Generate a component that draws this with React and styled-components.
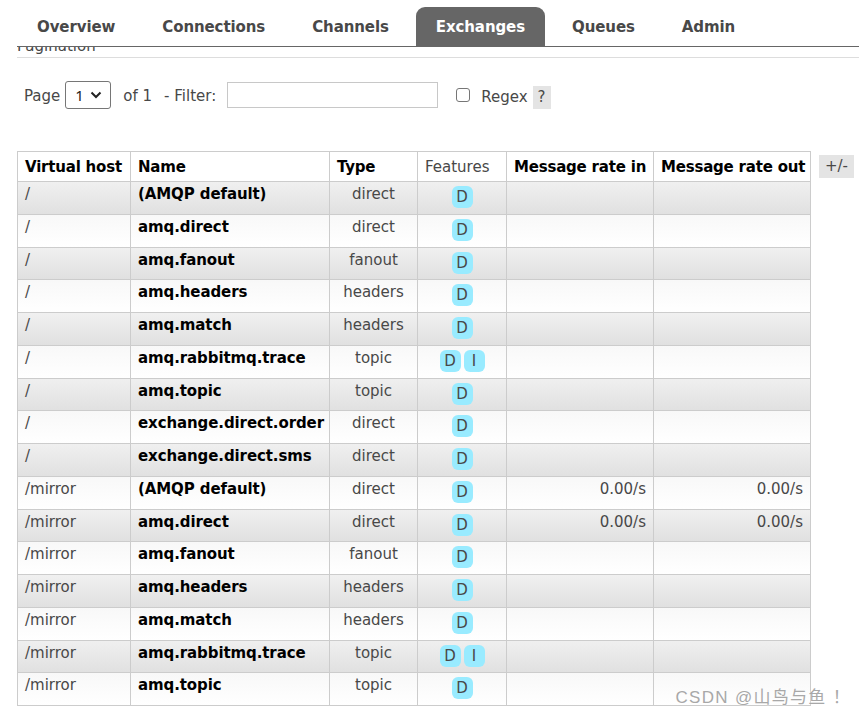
import React from 'react';
import styled, { createGlobalStyle } from 'styled-components';

const GlobalStyle = createGlobalStyle`
  html, body {
    margin: 0;
    padding: 0;
    background: #fff;
    font-family: 'DejaVu Sans', Verdana, sans-serif;
    color: #484848;
  }
`;

const tabs = ['Overview', 'Connections', 'Channels', 'Exchanges', 'Queues', 'Admin'];

const rows = [
  { vhost: '/', name: '(AMQP default)', type: 'direct', features: ['D'] },
  { vhost: '/', name: 'amq.direct', type: 'direct', features: ['D'] },
  { vhost: '/', name: 'amq.fanout', type: 'fanout', features: ['D'] },
  { vhost: '/', name: 'amq.headers', type: 'headers', features: ['D'] },
  { vhost: '/', name: 'amq.match', type: 'headers', features: ['D'] },
  { vhost: '/', name: 'amq.rabbitmq.trace', type: 'topic', features: ['D', 'I'] },
  { vhost: '/', name: 'amq.topic', type: 'topic', features: ['D'] },
  { vhost: '/', name: 'exchange.direct.order', type: 'direct', features: ['D'] },
  { vhost: '/', name: 'exchange.direct.sms', type: 'direct', features: ['D'] },
  { vhost: '/mirror', name: '(AMQP default)', type: 'direct', features: ['D'], rateIn: '0.00/s', rateOut: '0.00/s' },
  { vhost: '/mirror', name: 'amq.direct', type: 'direct', features: ['D'], rateIn: '0.00/s', rateOut: '0.00/s' },
  { vhost: '/mirror', name: 'amq.fanout', type: 'fanout', features: ['D'] },
  { vhost: '/mirror', name: 'amq.headers', type: 'headers', features: ['D'] },
  { vhost: '/mirror', name: 'amq.match', type: 'headers', features: ['D'] },
  { vhost: '/mirror', name: 'amq.rabbitmq.trace', type: 'topic', features: ['D', 'I'] },
  { vhost: '/mirror', name: 'amq.topic', type: 'topic', features: ['D'] },
];

const App = () => {
  return (
    <Page>
      <GlobalStyle />
      <Nav>
        {tabs.map((t) => (
          <Tab key={t} active={t === 'Exchanges'}>{t}</Tab>
        ))}
      </Nav>
      <Section>
        <SectionHead>
          <HeadText>Pagination</HeadText>
        </SectionHead>
        <Filters>
          <Label>Page</Label>
          <Select>
            <span>1</span>
            <svg width="12" height="8" viewBox="0 0 12 8">
              <path d="M1.5 1.5 L6 6 L10.5 1.5" fill="none" stroke="#222" strokeWidth="2" />
            </svg>
          </Select>
          <Label gap={12}>of 1</Label>
          <Label gap={12}>- Filter:</Label>
          <FilterInput />
          <Checkbox />
          <Label gap={11} down>Regex</Label>
          <Help>?</Help>
        </Filters>
        <TableRow>
          <List>
            <colgroup>
              <col style={{ width: 113 }} />
              <col style={{ width: 199 }} />
              <col style={{ width: 88 }} />
              <col style={{ width: 89 }} />
              <col style={{ width: 147 }} />
              <col style={{ width: 157 }} />
            </colgroup>
            <thead>
              <tr>
                <Th>Virtual host</Th>
                <Th>Name</Th>
                <Th>Type</Th>
                <Th plain>Features</Th>
                <Th>Message rate in</Th>
                <Th>Message rate out</Th>
              </tr>
            </thead>
            <tbody>
              {rows.map((r, i) => (
                <Tr key={i} alt={i % 2 === 0}>
                  <Td>{r.vhost}</Td>
                  <Td bold>{r.name}</Td>
                  <Td center>{r.type}</Td>
                  <Td center>
                    <Badges>
                      {r.features.map((f) => (
                        <Badge key={f}>{f}</Badge>
                      ))}
                    </Badges>
                  </Td>
                  <Td right>{r.rateIn}</Td>
                  <Td right>{r.rateOut}</Td>
                </Tr>
              ))}
            </tbody>
          </List>
          <Toggle>+/-</Toggle>
        </TableRow>
      </Section>
      <Watermark>CSDN @山鸟与鱼 ！</Watermark>
    </Page>
  );
};

export default App;

const Page = styled.div`
  position: relative;
  width: 859px;
  height: 715px;
  overflow: hidden;
`;

const Nav = styled.ul`
  list-style: none;
  display: flex;
  gap: 7px;
  margin: 0 0 0 17px;
  padding: 7px 0 0 0;
  border-bottom: 1px solid #666;
`;

const Tab = styled.li`
  height: 38px;
  line-height: 38px;
  padding: 1px 20px 0 20px;
  font-size: 15px;
  font-weight: bold;
  letter-spacing: -0.1px;
  color: ${(p) => (p.active ? '#fff' : '#484848')};
  background: ${(p) => (p.active ? '#666' : 'transparent')};
  border-radius: 9px 9px 0 0;
`;

const Section = styled.div`
  margin: 0 0 0 17px;
`;

const SectionHead = styled.div`
  height: 10px;
  overflow: hidden;
  display: flex;
  align-items: flex-end;
  border-bottom: 1px solid #ddd;
`;

const HeadText = styled.h2`
  margin: 0 0 2px 0;
  font-size: 15px;
  font-weight: normal;
  line-height: 18px;
  color: #484848;
`;

const Filters = styled.div`
  display: flex;
  align-items: center;
  margin-top: 23px;
  padding-left: 7px;
  height: 28px;
  font-size: 15px;
`;

const Label = styled.span`
  margin-left: ${(p) => (p.gap ? p.gap : 0)}px;
  color: #484848;
  position: relative;
  top: ${(p) => (p.down ? 2 : 1)}px;
`;

const Select = styled.div`
  box-sizing: border-box;
  width: 46px;
  height: 28px;
  margin-left: 5px;
  border: 1px solid #767676;
  border-radius: 3px;
  display: flex;
  align-items: center;
  justify-content: space-between;
  padding: 0 8px 0 9px;
  color: #222;
  font-family: 'Noto Sans', sans-serif;
  font-size: 15px;
`;

const FilterInput = styled.div`
  box-sizing: border-box;
  width: 211px;
  height: 26px;
  margin-left: 11px;
  border: 1px solid #c8c8c8;
`;

const Checkbox = styled.div`
  box-sizing: border-box;
  width: 14px;
  height: 14px;
  margin-left: 18px;
  border: 1px solid #767676;
  border-radius: 3px;
`;

const Help = styled.span`
  margin-left: 5px;
  width: 18px;
  height: 23px;
  line-height: 23px;
  text-align: center;
  background: #e4e4e4;
  color: #484848;
  position: relative;
  top: 2px;
`;

const TableRow = styled.div`
  display: flex;
  align-items: flex-start;
  gap: 8px;
  margin-top: 42px;
`;

const List = styled.table`
  border-collapse: collapse;
  table-layout: fixed;
  width: 793px;
  font-size: 15px;
`;

const Th = styled.th`
  height: 29px;
  padding: 0 0 0 7px;
  text-align: left;
  vertical-align: middle;
  border: 1px solid #ccc;
  font-weight: ${(p) => (p.plain ? 'normal' : 'bold')};
  letter-spacing: ${(p) => (p.plain ? '0' : '-0.2px')};
  color: ${(p) => (p.plain ? '#484848' : '#000')};
  white-space: nowrap;
  overflow: hidden;
`;

const Tr = styled.tr`
  background: ${(p) =>
    p.alt
      ? 'linear-gradient(to bottom, #f0f0f0, #e0e0e0)'
      : 'linear-gradient(to bottom, #f8f8f8, #ffffff)'};
`;

const Td = styled.td`
  box-sizing: border-box;
  height: 32.75px;
  padding: 3px 7px 0 7px;
  vertical-align: top;
  line-height: 18px;
  border: 1px solid #ccc;
  white-space: nowrap;
  overflow: hidden;
  text-align: ${(p) => (p.center ? 'center' : p.right ? 'right' : 'left')};
  font-weight: ${(p) => (p.bold ? 'bold' : 'normal')};
  letter-spacing: ${(p) => (p.bold ? '-0.1px' : '0')};
  color: ${(p) => (p.bold ? '#000' : '#484848')};
`;

const Badges = styled.div`
  display: flex;
  justify-content: center;
  gap: 3px;
  margin-top: 1px;
`;

const Badge = styled.span`
  display: inline-block;
  min-width: 21px;
  height: 22px;
  line-height: 22px;
  padding: 0 2px;
  box-sizing: border-box;
  text-align: center;
  border-radius: 6px;
  background: #99ebff;
  color: #484848;
`;

const Toggle = styled.span`
  margin-top: 4px;
  width: 35px;
  height: 23px;
  line-height: 23px;
  text-align: center;
  background: #e4e4e4;
  color: #484848;
  font-size: 15px;
`;

const Watermark = styled.div`
  position: absolute;
  right: 8px;
  bottom: 7px;
  font-family: 'Liberation Sans', 'Noto Sans CJK SC', sans-serif;
  font-size: 17px;
  letter-spacing: 1.3px;
  color: #a8a8a8;
  text-shadow: 0 0 2px #fff;
`;
